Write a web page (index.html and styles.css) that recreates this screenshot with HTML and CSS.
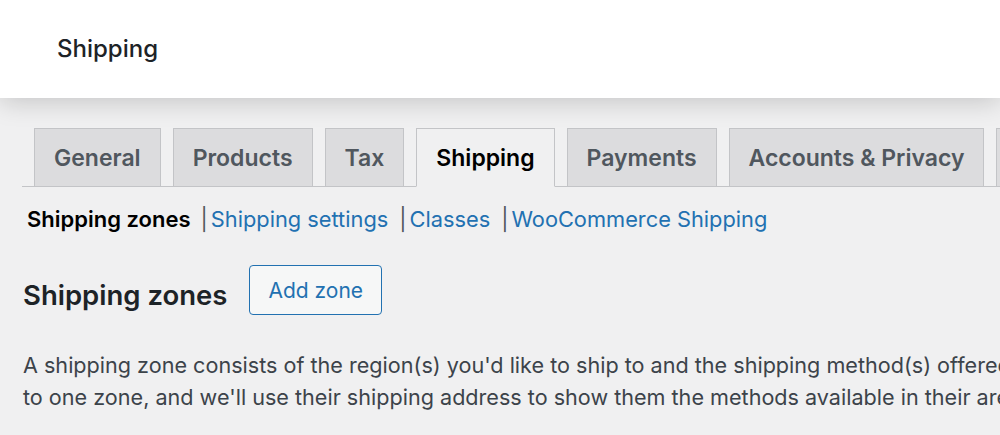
FILE: index.html
```html
<!DOCTYPE html>
<html lang="en">
<head>
<meta charset="utf-8">
<title>Shipping</title>
<link rel="stylesheet" href="styles.css">
</head>
<body>
<header class="topbar">
  <h1 class="page-title">Shipping</h1>
</header>
<main class="wrap">
  <nav class="tabs">
    <a class="tab">General</a>
    <a class="tab">Products</a>
    <a class="tab">Tax</a>
    <a class="tab tab-active">Shipping</a>
    <a class="tab">Payments</a>
    <a class="tab">Accounts &amp; Privacy</a>
    <a class="tab">Emails</a>
  </nav>
  <ul class="subnav">
    <li class="current">Shipping zones</li>
    <li><span class="sep">|</span><a>Shipping settings</a></li>
    <li><span class="sep">|</span><a>Classes</a></li>
    <li><span class="sep">|</span><a>WooCommerce Shipping</a></li>
  </ul>
  <div class="heading-row">
    <h2 class="section-title">Shipping zones</h2>
    <button class="btn">Add zone</button>
  </div>
  <p class="desc">A shipping zone consists of the region(s) you'd like to ship to and the shipping method(s) offered. A shopper can only be matched<br>to one zone, and we'll use their shipping address to show them the methods available in their area.</p>
</main>
</body>
</html>
```
FILE: styles.css
```css
html, body {
  margin: 0;
  padding: 0;
}
body {
  background: #f0f0f1;
  font-family: Inter, "Noto Sans", sans-serif;
  color: #3c434a;
  width: 1000px;
  height: 435px;
  overflow: hidden;
}
.topbar {
  background: #fff;
  height: 98px;
  display: flex;
  align-items: center;
  padding-left: 57px;
  box-shadow: 0 4px 24px rgba(0, 0, 0, 0.18);
  position: relative;
  z-index: 1;
}
.page-title {
  margin: 0;
  font-size: 24px;
  font-weight: 500;
  color: #1d2327;
  line-height: 1;
}
.wrap {
  padding: 30px 0 0 22px;
  width: 1500px;
}
.tabs {
  display: flex;
  border-bottom: 1px solid #c3c4c7;
  white-space: nowrap;
}
.tab {
  display: flex;
  align-items: center;
  height: 57px;
  margin-left: 12px;
  margin-bottom: -1px;
  padding: 0 19px;
  border: 1px solid #c3c4c7;
  background: #dcdcde;
  color: #50575e;
  font-size: 23px;
  font-weight: 600;
}
.tab-active {
  background: #f0f0f1;
  color: #000;
  border-bottom-color: #f0f0f1;
}
.subnav {
  list-style: none;
  margin: 18px 0 0 5px;
  padding: 0;
  display: flex;
  font-size: 21.8px;
  line-height: 28px;
  white-space: nowrap;
}
.subnav li {
  display: flex;
}
.current {
  color: #000;
  font-weight: 600;
  font-size: 22px;
  margin-right: 10px;
}
.sep {
  color: #50575e;
  margin-right: 3px;
}
.subnav a {
  color: #2271b1;
  margin-right: 11px;
}
.heading-row {
  display: flex;
  align-items: center;
  margin-top: 32px;
}
.section-title {
  margin: 12px 22px 0 1px;
  font-size: 27.5px;
  font-weight: 600;
  line-height: 1;
  color: #1d2327;
}
.btn {
  height: 50px;
  padding: 0 18px;
  border: 1px solid #2271b1;
  border-radius: 4px;
  background: #f6f7f7;
  color: #2271b1;
  font-family: inherit;
  font-size: 21px;
}
.desc {
  margin: 34px 0 0 1px;
  font-size: 21.6px;
  line-height: 32px;
  white-space: nowrap;
}
```
